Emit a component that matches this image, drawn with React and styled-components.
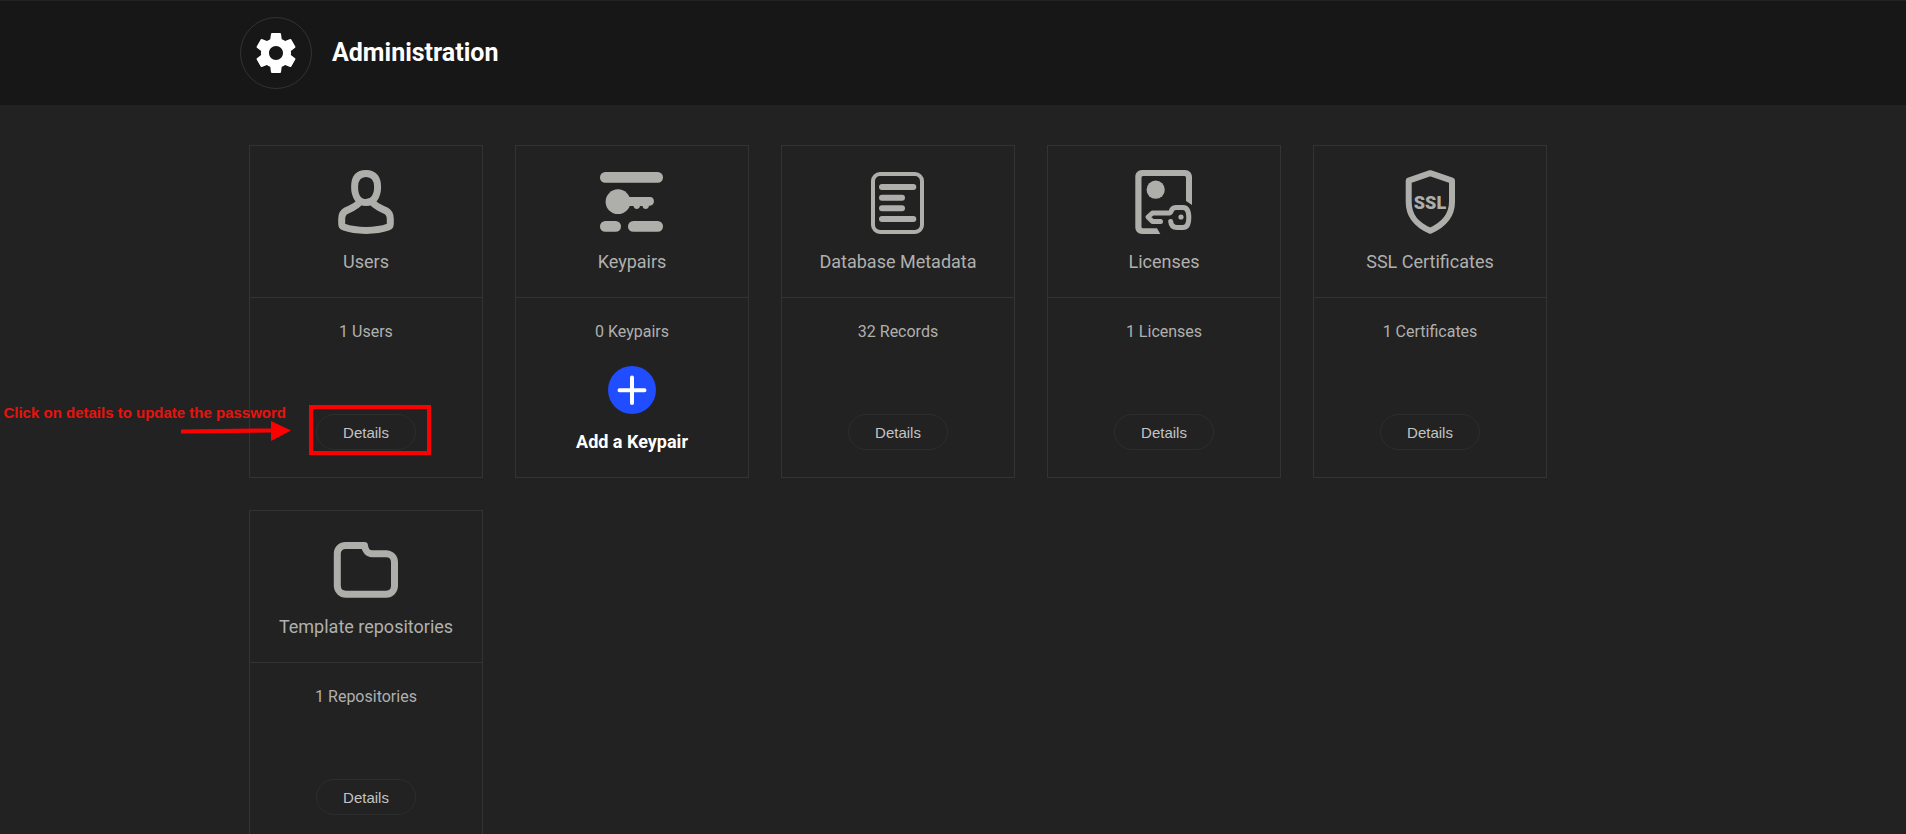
import React from 'react';
import styled, { createGlobalStyle } from 'styled-components';

const GlobalStyle = createGlobalStyle`
  * {
    box-sizing: border-box;
  }

  body {
    margin: 0;
    background: #222;
    color: #b0b0ae;
    font-family: Roboto, sans-serif;
    overflow-x: hidden;
  }
`;

const Header = styled.header`
  background: #171717;
  border-top: 1px solid #222;
`;

const HeaderInner = styled.div`
  display: flex;
  align-items: center;
  gap: 20px;
  max-width: 1426px;
  margin: 0 auto;
  padding: 16px 0;
`;

const HeaderIcon = styled.div`
  display: flex;
  align-items: center;
  justify-content: center;
  width: 72px;
  height: 72px;
  border: 1px solid #333;
  border-radius: 50%;
`;

const Title = styled.h1`
  margin: 0;
  color: #fff;
  font-size: 25px;
  font-weight: 700;
  line-height: 32px;
`;

const Main = styled.main`
  max-width: 1426px;
  margin: 0 auto;
  padding: 40px 9px;
`;

const Grid = styled.div`
  display: grid;
  grid-template-columns: repeat(auto-fill, 234px);
  gap: 32px;
`;

const Card = styled.section`
  position: relative;
  display: flex;
  flex-direction: column;
  border: 1px solid #333;
`;

const CardHead = styled.div`
  display: flex;
  flex-direction: column;
  align-items: center;
  gap: 16px;
  padding: 24px 0;
  border-bottom: 1px solid #333;
`;

const CardTitle = styled.h2`
  margin: 0;
  font-size: 18px;
  font-weight: 400;
  line-height: 23px;
`;

const CardBody = styled.div`
  display: flex;
  flex-direction: column;
  align-items: center;
  justify-content: space-between;
  min-height: 179px;
  padding: 24px 0 ${({ tall }) => (tall ? 25 : 27)}px;
`;

const Count = styled.p`
  margin: 0;
  font-size: 16px;
  line-height: 20px;
`;

const DetailsButton = styled.button`
  width: 100px;
  height: 36px;
  padding: 0;
  border: 1px solid #2d2d2d;
  border-radius: 18px;
  background: transparent;
  color: #c4c4c4;
  font-family: 'Liberation Sans', Arial, sans-serif;
  font-size: 15px;
  cursor: pointer;
`;

const AddButton = styled.button`
  display: flex;
  flex-direction: column;
  align-items: center;
  gap: 18px;
  padding: 0;
  border: 0;
  background: none;
  color: #fff;
  font-family: inherit;
  font-size: 18px;
  font-weight: 700;
  line-height: 20px;
  cursor: pointer;
`;

const IconSvg = styled.svg`
  display: block;
  width: 64px;
  height: 64px;
  overflow: visible;
  fill: #aeaeaa;
`;

const StrokeGroup = styled.g`
  fill: none;
  stroke: #aeaeaa;
  stroke-width: ${({ width }) => width};
  stroke-linecap: ${({ cap }) => cap || 'butt'};
  stroke-linejoin: round;
`;

const IconText = styled.text`
  font-family: Roboto, sans-serif;
  font-size: 18px;
  font-weight: 900;
  text-anchor: middle;
`;

const Highlight = styled.div`
  position: absolute;
  top: 259px;
  left: 59px;
  width: 122px;
  height: 50px;
  border: 4px solid #f00;
  pointer-events: none;
`;

const Note = styled.div`
  position: absolute;
  top: 258px;
  right: 196px;
  color: #e8130c;
  font-family: 'Liberation Sans', Arial, sans-serif;
  font-size: 15px;
  font-weight: 700;
  line-height: 18px;
  white-space: nowrap;
`;

const Arrow = styled.svg`
  position: absolute;
  top: 275px;
  right: 191px;
  width: 110px;
  height: 20px;
  fill: #f00;
`;

const GearIcon = () => (
  <svg width="48" height="48" viewBox="0 0 24 24" fill="#fff" aria-hidden="true">
    <path d="M19.43 12.98c.04-.32.07-.64.07-.98s-.03-.66-.07-.98l2.11-1.65c.19-.15.24-.42.12-.64l-2-3.46c-.12-.22-.39-.3-.61-.22l-2.49 1c-.52-.4-1.08-.73-1.69-.98l-.38-2.65C14.46 2.18 14.25 2 14 2h-4c-.25 0-.46.18-.49.42l-.38 2.65c-.61.25-1.17.59-1.69.98l-2.49-1c-.23-.09-.49 0-.61.22l-2 3.46c-.13.22-.07.49.12.64l2.11 1.65c-.04.32-.07.65-.07.98s.03.66.07.98l-2.11 1.65c-.19.15-.24.42-.12.64l2 3.46c.12.22.39.3.61.22l2.49-1c.52.4 1.08.73 1.69.98l.38 2.65c.03.24.24.42.49.42h4c.25 0 .46-.18.49-.42l.38-2.65c.61-.25 1.17-.59 1.69-.98l2.49 1c.23.09.49 0 .61-.22l2-3.46c.12-.22.07-.49-.12-.64l-2.11-1.65zM12 15.5c-1.93 0-3.5-1.57-3.5-3.5s1.57-3.5 3.5-3.5 3.5 1.57 3.5 3.5-1.57 3.5-3.5 3.5z" />
  </svg>
);

const UsersIcon = () => (
  <IconSvg viewBox="0 0 64 64" aria-hidden="true">
    <StrokeGroup width="7">
      <path d="M32 3.4C24 3.4 20.6 8.500 20.600 17C20.600 26.500 25 32.600 32 32.600C39 32.600 43.600 26.500 43.600 17C43.600 8.500 40 3.400 32 3.400Z" />
      <path d="M25.500 32.500C21 37.500 16.500 38.500 12.500 40.500C8.500 42.500 7.700 45.500 7.700 49V53.500C7.700 55.500 8.200 56.500 9.700 57C22 61.500 42 61.500 54.300 57C55.800 56.500 56.300 55.500 56.300 53.500V49C56.300 45.500 55.500 42.500 51.500 40.500C47.500 38.500 43 37.500 38.500 32.500" />
    </StrokeGroup>
  </IconSvg>
);

const KeypairsIcon = () => (
  <IconSvg viewBox="0 0 64 64" aria-hidden="true">
    <rect x="0" y="2" width="63" height="10.7" rx="5.3" />
    <circle cx="18" cy="31.7" r="12.4" />
    <path d="M26 27H50C55.3 27 55.3 35.7 50 35.7H49C48.5 40 43 40 42.5 36H40C39.5 40 34 40 33.5 36H26Z" />
    <rect x="0" y="51" width="21" height="10.7" rx="5.3" />
    <rect x="28" y="51" width="35" height="10.7" rx="5.3" />
  </IconSvg>
);

const MetadataIcon = () => (
  <IconSvg viewBox="0 0 64 64" aria-hidden="true">
    <StrokeGroup width="4">
      <rect x="7" y="4" width="49" height="58" rx="7" />
    </StrokeGroup>
    <rect x="13" y="14" width="37.3" height="6" rx="3" />
    <rect x="13" y="24.7" width="26" height="6" rx="3" />
    <rect x="13" y="35.3" width="26" height="6" rx="3" />
    <rect x="13" y="46" width="37.3" height="6" rx="3" />
  </IconSvg>
);

const LicensesIcon = () => (
  <IconSvg viewBox="0 0 64 64" aria-hidden="true">
    <path d="M25 58.3L28.3 64H10C6 64 3.3 61 3.3 57V7C3.3 3 6 0 10 0H53C57 0 60 3 60 7V35L54 31V7.5Q54 6 52.5 6H11Q9.5 6 9.5 7.5V56.8Q9.5 58.3 11 58.3Z" />
    <circle cx="23.7" cy="19.7" r="9.1" />
    <StrokeGroup width="5" cap="round">
      <path d="M28.5 51.5H20.5L16 47L20.5 43H37.5C39 43 39 41 40 39.5C41 38 42 37.5 44 37.5H51C56 37.5 56.8 43 56.8 47.5C56.8 52 56 57.5 51 57.5H45C41 57.5 39 55 38.7 51.5" />
    </StrokeGroup>
    <circle cx="49" cy="47" r="2.6" />
  </IconSvg>
);

const SslIcon = () => (
  <IconSvg viewBox="0 0 64 64" aria-hidden="true">
    <StrokeGroup width="6">
      <path d="M32.2 3.2L54 10.7V32C54 46 46 54.5 32.2 60.8C18 54.5 10.7 46 10.7 32V10.7Z" />
    </StrokeGroup>
    <IconText x="32" y="39">SSL</IconText>
  </IconSvg>
);

const FolderIcon = () => (
  <IconSvg viewBox="0 0 64 64" aria-hidden="true">
    <StrokeGroup width="7">
      <path d="M30.5 10.5H11.5C7 10.5 3.3 14 3.3 18.5V50.5C3.3 55.5 7 59.2 12 59.2H52C57 59.2 60.5 55.5 60.5 50.5V27.5C60.5 22.5 57 18.7 52 18.7H38C34 18.7 31 15.5 30.5 10.5Z" />
    </StrokeGroup>
  </IconSvg>
);

const PlusIcon = () => (
  <svg width="48" height="48" viewBox="0 0 48 48" aria-hidden="true">
    <circle cx="24" cy="24" r="24" fill="#1f4dff" />
    <path d="M24 11.5V37M11.5 24.3H36.5" stroke="#fff" strokeWidth="4" strokeLinecap="round" />
  </svg>
);

const cards = [
  { title: 'Users', count: '1 Users', icon: UsersIcon, highlighted: true },
  { title: 'Keypairs', count: '0 Keypairs', icon: KeypairsIcon, add: 'Add a Keypair' },
  { title: 'Database Metadata', count: '32 Records', icon: MetadataIcon },
  { title: 'Licenses', count: '1 Licenses', icon: LicensesIcon },
  { title: 'SSL Certificates', count: '1 Certificates', icon: SslIcon },
  { title: 'Template repositories', count: '1 Repositories', icon: FolderIcon },
];

const Callout = () => (
  <>
    <Note>Click on details to update the password</Note>
    <Arrow viewBox="0 0 110 20" aria-hidden="true">
      <path d="M0 8.4L90 7.4V0L110 9.5L90 20V11.6L0 12.6Z" />
    </Arrow>
    <Highlight />
  </>
);

const AdminCard = ({ title, count, icon: Icon, add, highlighted }) => (
  <Card>
    <CardHead>
      <Icon />
      <CardTitle>{title}</CardTitle>
    </CardHead>
    <CardBody tall={add}>
      <Count>{count}</Count>
      {add ? (
        <AddButton type="button">
          <PlusIcon />
          {add}
        </AddButton>
      ) : (
        <DetailsButton type="button">Details</DetailsButton>
      )}
    </CardBody>
    {highlighted && <Callout />}
  </Card>
);

export default function App() {
  return (
    <>
      <GlobalStyle />
      <Header>
        <HeaderInner>
          <HeaderIcon>
            <GearIcon />
          </HeaderIcon>
          <Title>Administration</Title>
        </HeaderInner>
      </Header>
      <Main>
        <Grid>
          {cards.map((card) => (
            <AdminCard key={card.title} {...card} />
          ))}
        </Grid>
      </Main>
    </>
  );
}
